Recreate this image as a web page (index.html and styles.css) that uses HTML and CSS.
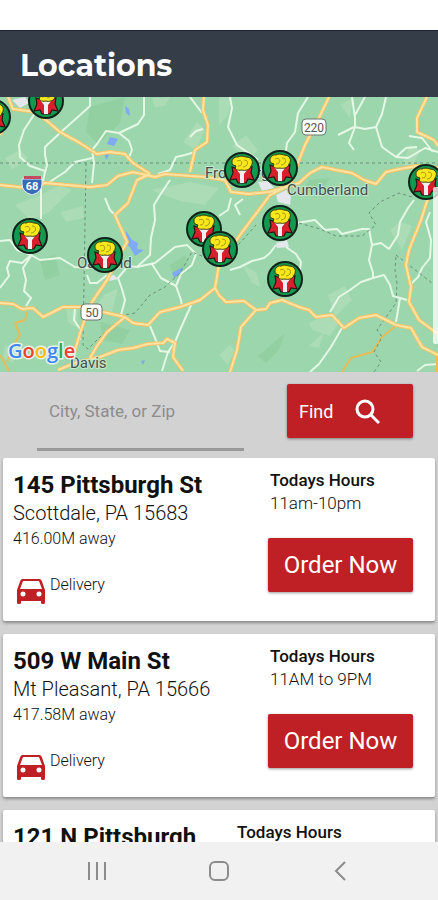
FILE: index.html
```html
<!DOCTYPE html>
<html lang="en">
<head>
<meta charset="utf-8">
<meta name="viewport" content="width=device-width, initial-scale=1">
<title>Locations</title>
<link rel="stylesheet" href="styles.css">
</head>
<body>
<div class="app">
  <header class="header"><h1 class="header-title">Locations</h1></header>

  <svg class="map" viewBox="0 97 438 275" preserveAspectRatio="xMidYMid slice" role="img" aria-label="Map of locations">
    <defs>
      <g id="pin">
        <circle r="17" fill="#12994f" stroke="#10231b" stroke-width="2"/>
        <path d="M-10-3L-5-1 0 2 5-1 10-3 9 3 12 10 6 9 4 13-4 13-6 9-12 10-9 3Z" fill="#d8202c" stroke="#2b1414" stroke-width="1.2"/>
        <path d="M-6-1L6-1 2 4 2 13-2 13-2 4Z" fill="#f3eef0"/>
        <path d="M-9-5C-12-9-8-14-4-13C0-15 3-13 4-13C10-13 12-8 9-4C8 0 3 1 0 0C-5 1-8-1-6-4Z" fill="#f8e71c" stroke="#3c3a0c" stroke-width="1"/>
        <path d="M-5-9Q-1-11 0-7Q-1-3-4-4M2-10Q7-10 5-5Q3-3 1-3" fill="none" stroke="#a89c10" stroke-width="1"/>
      </g>
      <g id="roads">
        <path d="M0 185L28 188 45 183 90 187 107 185 118 176 133 172 155 177 165 174 205 177 225 180 231 192 249 194 269 192 282 188 299 183 310 173 322 167 336 170 352 173 364 180 376 184 386 172 400 169 416 166 438 168"/>
        <path d="M8 97L13 109 35 112 47 121 60 132 80 143 97 154 110 152 125 154 133 163 150 174"/>
        <path d="M204 97L203 110 208 125 207 142 195 150 190 172"/>
        <path d="M329 97L318 120 305 145 297 165 290 185 270 195 240 235 219 265 215 288 200 300 180 307 160 312 148 325 133 323 125 317 103 312 80 307 63 307 43 317 33 308 22 309 13 304 0 303"/>
        <path d="M215 288L219 295 226 302 244 301 256 310 266 309 270 303 282 300 299 307 309 310 316 317 332 315 344 328 359 318 376 315 396 325 411 328 422 347 438 355"/>
        <path d="M256 310L241 327 237 350 230 372"/>
        <path d="M429 195L421 220 409 250 406 265 411 287 409 302 419 320 438 334"/>
        <path d="M427 97L417 118 417 132 434 140 438 146"/>
        <path d="M150 174L137 180 128 203 115 215 127 242 118 258 107 280 92 302 82 327 75 350 70 357"/>
        <path d="M58 370L75 363 100 357 118 350 133 348 148 344 163 343 167 339 175 343 173 357 183 371"/>
        <path d="M125 317L107 332 97 346 90 358M0 116L4 124 0 135"/>
      </g>
    </defs>
    <rect x="0" y="97" width="438" height="275" fill="#9bd6ac"/>
    <g class="terrain">
      <path d="M15 205L40 195 60 185 72 190 48 213 30 220ZM60 212L83 206 84 218 66 222ZM150 190L190 182 219 188 205 205 180 201ZM183 142L197 122 205 130 196 150ZM152 98L170 97 166 105 155 108ZM219 97L232 97 228 115 219 125ZM232 146L246 135 258 150 248 160ZM94 310L104 295 118 288 112 312ZM66 308L78 310 77 328 68 322ZM328 295L345 286 352 300 335 317ZM309 323L328 314 341 320 330 336 312 330ZM309 346L324 332 319 348ZM402 165L410 145 421 150 413 165ZM390 230L400 222 412 226 402 250ZM5 345L15 350 13 363 3 358ZM219 355L230 345 235 350 228 365ZM242 264L257 273 260 287 252 283ZM5 158L20 150 28 158 12 170ZM340 105L353 98 350 118Z"/>
      <path class="terrain-dark" d="M90 107L125 97 120 123 98 144 86 132ZM310 180L330 178 318 194 302 192ZM100 322L130 330 122 344 103 340ZM258 356L285 333 279 350 266 363ZM170 265L185 255 190 270 176 280ZM40 260L55 255 60 275 45 280Z"/>
    </g>
    <g class="lakes">
      <path d="M125 106L129 109 130 116 126 113ZM110 137L118 139 114 146 107 144ZM104 152L109 154 107 160 105 157ZM126 231L132 240 138 243 137 249 144 250 135 256 130 247 125 243ZM172 273L183 267 181 273 174 278ZM141 361L145 360 143 365Z"/>
    </g>
    <g class="towns"><path d="M12 100L25 97 29 103 20 108ZM258 182L268 181 274 188 262 191ZM276 195L286 190 291 197 290 205 278 202ZM276 243L287 240 289 247 277 248ZM107 276L114 275 118 279 109 281Z"/></g>
    <g class="minor">
      <path d="M90 97L90 106 79 116 61 132 45 147 45 155 47 165 44 176 42 186"/>
      <path d="M35 113L24 130 19 145 20 157 30 166 45 171"/>
      <path d="M144 97L144 115 138 124 119 133 106 131 97 144 92 150 94 163 92 183M119 133L129 141 132 150 128 160"/>
      <path d="M92 158L75 162 65 172 48 183M41 187L41 219M0 241L10 240 17 250 31 255 40 260 60 258 75 267 89 268"/>
      <path d="M31 255L22 263 10 261 7 268 9 276 0 288M31 256L23 268 26 280 24 291 31 298 26 306"/>
      <path d="M170 180L160 195 154 205 155 220 151 238 150 255 137 267 128 266 118 278 122 289 125 300 121 315"/>
      <path d="M137 267L155 263 175 247 187 245 196 254 192 265 181 274 176 286 161 278 152 264M176 286L181 300 182 306"/>
      <path d="M105 198L110 210 115 215M87 275L90 283 97 283 107 275M75 307L74 320 80 329 80 340"/>
      <path d="M192 303L180 330 175 342 168 352 162 371M150 326L155 338 160 351 170 352"/>
      <path d="M190 137L196 131 203 129M195 152L185 155 176 157 170 170 158 174M202 113L190 97"/>
      <path d="M230 97L232 108 228 127 237 145 247 152 258 160"/>
      <path d="M308 97L298 113 295 132 287 143 284 165M352 97L355 118 355 127 349 143 354 150M365 97L355 115M355 127L365 129 376 127 379 137 382 147 396 157 406 148 417 147M438 152L425 148 408 158 396 157M386 97L382 114 376 127M338 135L354 127M409 136L422 138 433 152"/>
      <path d="M240 215L235 205 243 199M231 198L228 210 219 216M297 223L315 220 325 230 337 229 342 234 362 229 369 229 372 245 369 260 373 273 373 278 384 275 390 285 393 296 407 300M373 278L361 282 350 290 339 297 330 312M372 245L381 243 389 249 398 235 400 222 408 208 414 200"/>
      <path d="M400 298L398 310 396 322M411 284L418 277 422 268 430 258 431 240 426 222 430 212"/>
      <path d="M276 245L270 253 264 258 252 261 240 267 230 270M286 247L296 254 301 262 300 270M342 328L331 347 319 364 310 372M417 371L425 365 438 364"/>
    </g>
    <path class="trail" d="M27 312L25 320 15 323 20 335 14 344 7 362M0 355L9 371M397 325L382 337 372 352 351 358 342 372M437 355L437 372"/>
    <path class="border" d="M0 163H438M86 163L83 345 88 349 107 330 125 315 135 313 150 295 165 287 180 273 192 252 219 263 240 243 256 225M299 223L320 229 336 236 362 236 376 225 369 213 380 202 399 193 412 197M396 255L432 283M396 257L395 270 397 283 396 303 377 330 382 337 374 352 381 362 374 372"/>
    <use href="#roads" class="road-case"/>
    <use href="#roads" class="road"/>
    <path d="M22 179H42V184Q42 192 32 195Q22 192 22 184Z" fill="#376cb8" stroke="#e7edf5" stroke-width="1"/>
    <path d="M24 176H41V179H24Z" fill="#c44a5f"/>
    <text class="shield-blue" x="32" y="190" text-anchor="middle">68</text>
    <rect class="shield" x="302" y="119" width="24" height="16" rx="4"/>
    <text class="shield-text" x="314" y="132" text-anchor="middle">220</text>
    <rect class="shield" x="81" y="304" width="21" height="16" rx="4"/>
    <text class="shield-text" x="92" y="317" text-anchor="middle">50</text>
    <g class="place">
      <text x="205" y="178">Frostburg</text>
      <text x="287" y="195">Cumberland</text>
      <text x="77" y="268">Oakland</text>
      <text x="70" y="368">Davis</text>
    </g>
    <use href="#pin" x="-7" y="117"/><use href="#pin" x="46" y="101"/>
    <use href="#pin" x="242" y="170"/><use href="#pin" x="280" y="168"/>
    <use href="#pin" x="426" y="182"/><use href="#pin" x="280" y="223"/>
    <use href="#pin" x="285" y="279"/><use href="#pin" x="30" y="236"/>
    <use href="#pin" x="105" y="255"/><use href="#pin" x="204" y="229"/>
    <use href="#pin" x="220" y="249"/>
    <rect x="433" y="187" width="10" height="157" rx="2" fill="#fff" opacity=".75"/>
    <text class="google" x="8" y="358"><tspan fill="#4285f4">G</tspan><tspan fill="#ea4335">o</tspan><tspan fill="#fbbc05">o</tspan><tspan fill="#4285f4">g</tspan><tspan fill="#34a853">l</tspan><tspan fill="#ea4335">e</tspan></text>
  </svg>

  <form class="search">
    <input class="search-input" type="text" placeholder="City, State, or Zip" aria-label="City, State, or Zip">
    <button class="button find" type="button">Find
      <svg width="25" height="25" viewBox="0 0 25 25" fill="none" stroke="currentColor" stroke-width="3" aria-hidden="true"><circle cx="10" cy="10" r="8"/><path d="M16 16L24 24"/></svg>
    </button>
  </form>

  <main class="list">
    <article class="card">
      <div class="place-info">
        <h2 class="street">145 Pittsburgh St</h2>
        <p class="city">Scottdale, PA 15683</p>
        <p class="distance">416.00M away</p>
        <p class="service"><svg class="car" viewBox="0 0 28 25" aria-hidden="true"><path fill="currentColor" fill-rule="evenodd" d="M5.500 0H22.500Q24 0 24.600 1.600L28 11V23.500Q28 25 26.500 25H25.500Q24 25 24 23.500V22H4V23.500Q4 25 2.500 25H1.500Q0 25 0 23.500V11L3.400 1.600Q4 0 5.500 0ZM6 2L3 10H25L22 2ZM6 12.500A2.500 2.500 0 1 0 6 17.500A2.500 2.500 0 1 0 6 12.500ZM22 12.500A2.500 2.500 0 1 0 22 17.500A2.500 2.500 0 1 0 22 12.500Z"/></svg><span>Delivery</span></p>
      </div>
      <div class="hours">
        <h3 class="hours-title">Todays Hours</h3>
        <p class="hours-text">11am-10pm</p>
        <button class="button order" type="button">Order Now</button>
      </div>
    </article>
    <article class="card">
      <div class="place-info">
        <h2 class="street">509 W Main St</h2>
        <p class="city">Mt Pleasant, PA 15666</p>
        <p class="distance">417.58M away</p>
        <p class="service"><svg class="car" viewBox="0 0 28 25" aria-hidden="true"><path fill="currentColor" fill-rule="evenodd" d="M5.500 0H22.500Q24 0 24.600 1.600L28 11V23.500Q28 25 26.500 25H25.500Q24 25 24 23.500V22H4V23.500Q4 25 2.500 25H1.500Q0 25 0 23.500V11L3.400 1.600Q4 0 5.500 0ZM6 2L3 10H25L22 2ZM6 12.500A2.500 2.500 0 1 0 6 17.500A2.500 2.500 0 1 0 6 12.500ZM22 12.500A2.500 2.500 0 1 0 22 17.500A2.500 2.500 0 1 0 22 12.500Z"/></svg><span>Delivery</span></p>
      </div>
      <div class="hours">
        <h3 class="hours-title">Todays Hours</h3>
        <p class="hours-text">11AM to 9PM</p>
        <button class="button order" type="button">Order Now</button>
      </div>
    </article>
    <article class="card card-wide-hours">
      <div class="place-info"><h2 class="street">121 N Pittsburgh</h2></div>
      <div class="hours"><h3 class="hours-title">Todays Hours</h3></div>
    </article>
  </main>

  <nav class="system-nav" aria-label="System">
    <button class="nav-button" type="button" aria-label="Recent apps"><svg width="20" height="20" viewBox="0 0 20 20"><path d="M2 1V19M10 1V19M18 1V19"/></svg></button>
    <button class="nav-button" type="button" aria-label="Home"><svg width="20" height="20" viewBox="0 0 20 20"><rect x="1" y="1" width="18" height="18" rx="5"/></svg></button>
    <button class="nav-button" type="button" aria-label="Back"><svg width="20" height="20" viewBox="0 0 20 20"><path d="M14 1L5 10L14 19"/></svg></button>
  </nav>
</div>
</body>
</html>
```
FILE: styles.css
```css
* { box-sizing: border-box; }
body { margin: 0; background: #fff; color: #111; font-family: Roboto, sans-serif; }
h1, h2, h3, p { margin: 0; }
button, input { font-family: inherit; }

.app { display: flex; flex-direction: column; height: 100vh; padding-top: 30px; overflow: hidden; }

.header { flex: none; padding: 17px 20px 14px; background: #343d48; border-top: 1px solid #1b2433; }
.header-title { color: #fff; font: 700 30px/35px Montserrat, Inter, sans-serif; }

.map { display: block; flex: none; width: 100%; aspect-ratio: 438 / 275; }
.terrain { fill: #b2dfb9; opacity: .7; }
.terrain-dark { fill: #8fce9f; }
.lakes { fill: #7eabf2; }
.towns { fill: #e4e8ec; }
.minor { fill: none; stroke: #e5f8e5; stroke-width: 2; stroke-linejoin: round; }
.trail { fill: none; stroke: #e7bc55; stroke-width: 2; stroke-linejoin: round; }
.border { fill: none; stroke: #6b8f7b; stroke-width: 1; stroke-dasharray: 3 3; }
.road-case, .road { fill: none; stroke-linejoin: round; }
.road-case { stroke: #f3c36b; stroke-width: 4; }
.road { stroke: #ffe3a0; stroke-width: 2; }
.shield { fill: #fff; stroke: #6c7772; stroke-width: 1; }
.shield-text { fill: #555; font-size: 12px; }
.shield-blue { fill: #fff; font-size: 11px; font-weight: 700; }
.place { fill: #45504e; font-size: 15px; paint-order: stroke; stroke: #c5e8cd; stroke-width: 2px; }
.google { font: 600 20px "Open Sans", sans-serif; paint-order: stroke; stroke: #e6f3e8; stroke-width: 3px; }

.search { display: flex; flex: none; justify-content: space-between; align-items: flex-start; padding: 12px 25px 7px 37px; background: #d2d2d2; }
.search-input { width: 55%; height: 67px; padding: 0 12px 10px; border: 0; border-bottom: 3px solid #999; background: none; color: #444; font-size: 17px; }
.search-input::placeholder { color: #8c8c8c; opacity: 1; }

.button { border: 0; border-radius: 2px; background: #be2026; color: #fff; box-shadow: 0 1px 3px rgba(0, 0, 0, .4); }
.find { display: flex; align-items: center; gap: 22px; width: 126px; height: 54px; padding: 0 12px; font-size: 18px; }
.order { width: 100%; height: 54px; margin-top: 23px; padding: 0; font-size: 24px; }

.list { display: flex; flex: 1; flex-direction: column; gap: 13px; min-height: 0; padding: 0 3px; overflow: hidden; background: #d2d2d2; }
.card { display: grid; flex: none; grid-template-columns: 1fr 145px; min-height: 163px; padding: 11px 22px 0 10px; border-radius: 2px; background: #fff; box-shadow: 0 2px 3px rgba(0, 0, 0, .35); }
.card-wide-hours { grid-template-columns: 1fr 178px; }
.street { padding-top: 2px; font-size: 24px; line-height: 28px; font-weight: 700; white-space: nowrap; }
.city { font-size: 20px; line-height: 28px; }
.city, .distance, .service, .hours-text { color: #111; font-weight: 300; }
.distance, .service { font-size: 16px; line-height: 23px; }
.hours-title, .hours-text { padding-left: 2px; font-size: 17px; line-height: 23px; }
.hours-title { font-weight: 500; }
.service { display: flex; gap: 5px; margin-top: 23px; padding-left: 4px; }
.car { width: 28px; height: 25px; margin-top: 6px; color: #be2026; }

.system-nav { display: flex; flex: none; justify-content: center; align-items: center; gap: 82px; height: 58px; background: #f1f1f1; }
.nav-button { display: flex; justify-content: center; width: 40px; padding: 10px 0; border: 0; background: none; }
.nav-button svg { fill: none; stroke: #8c8c8c; stroke-width: 2; }
```
